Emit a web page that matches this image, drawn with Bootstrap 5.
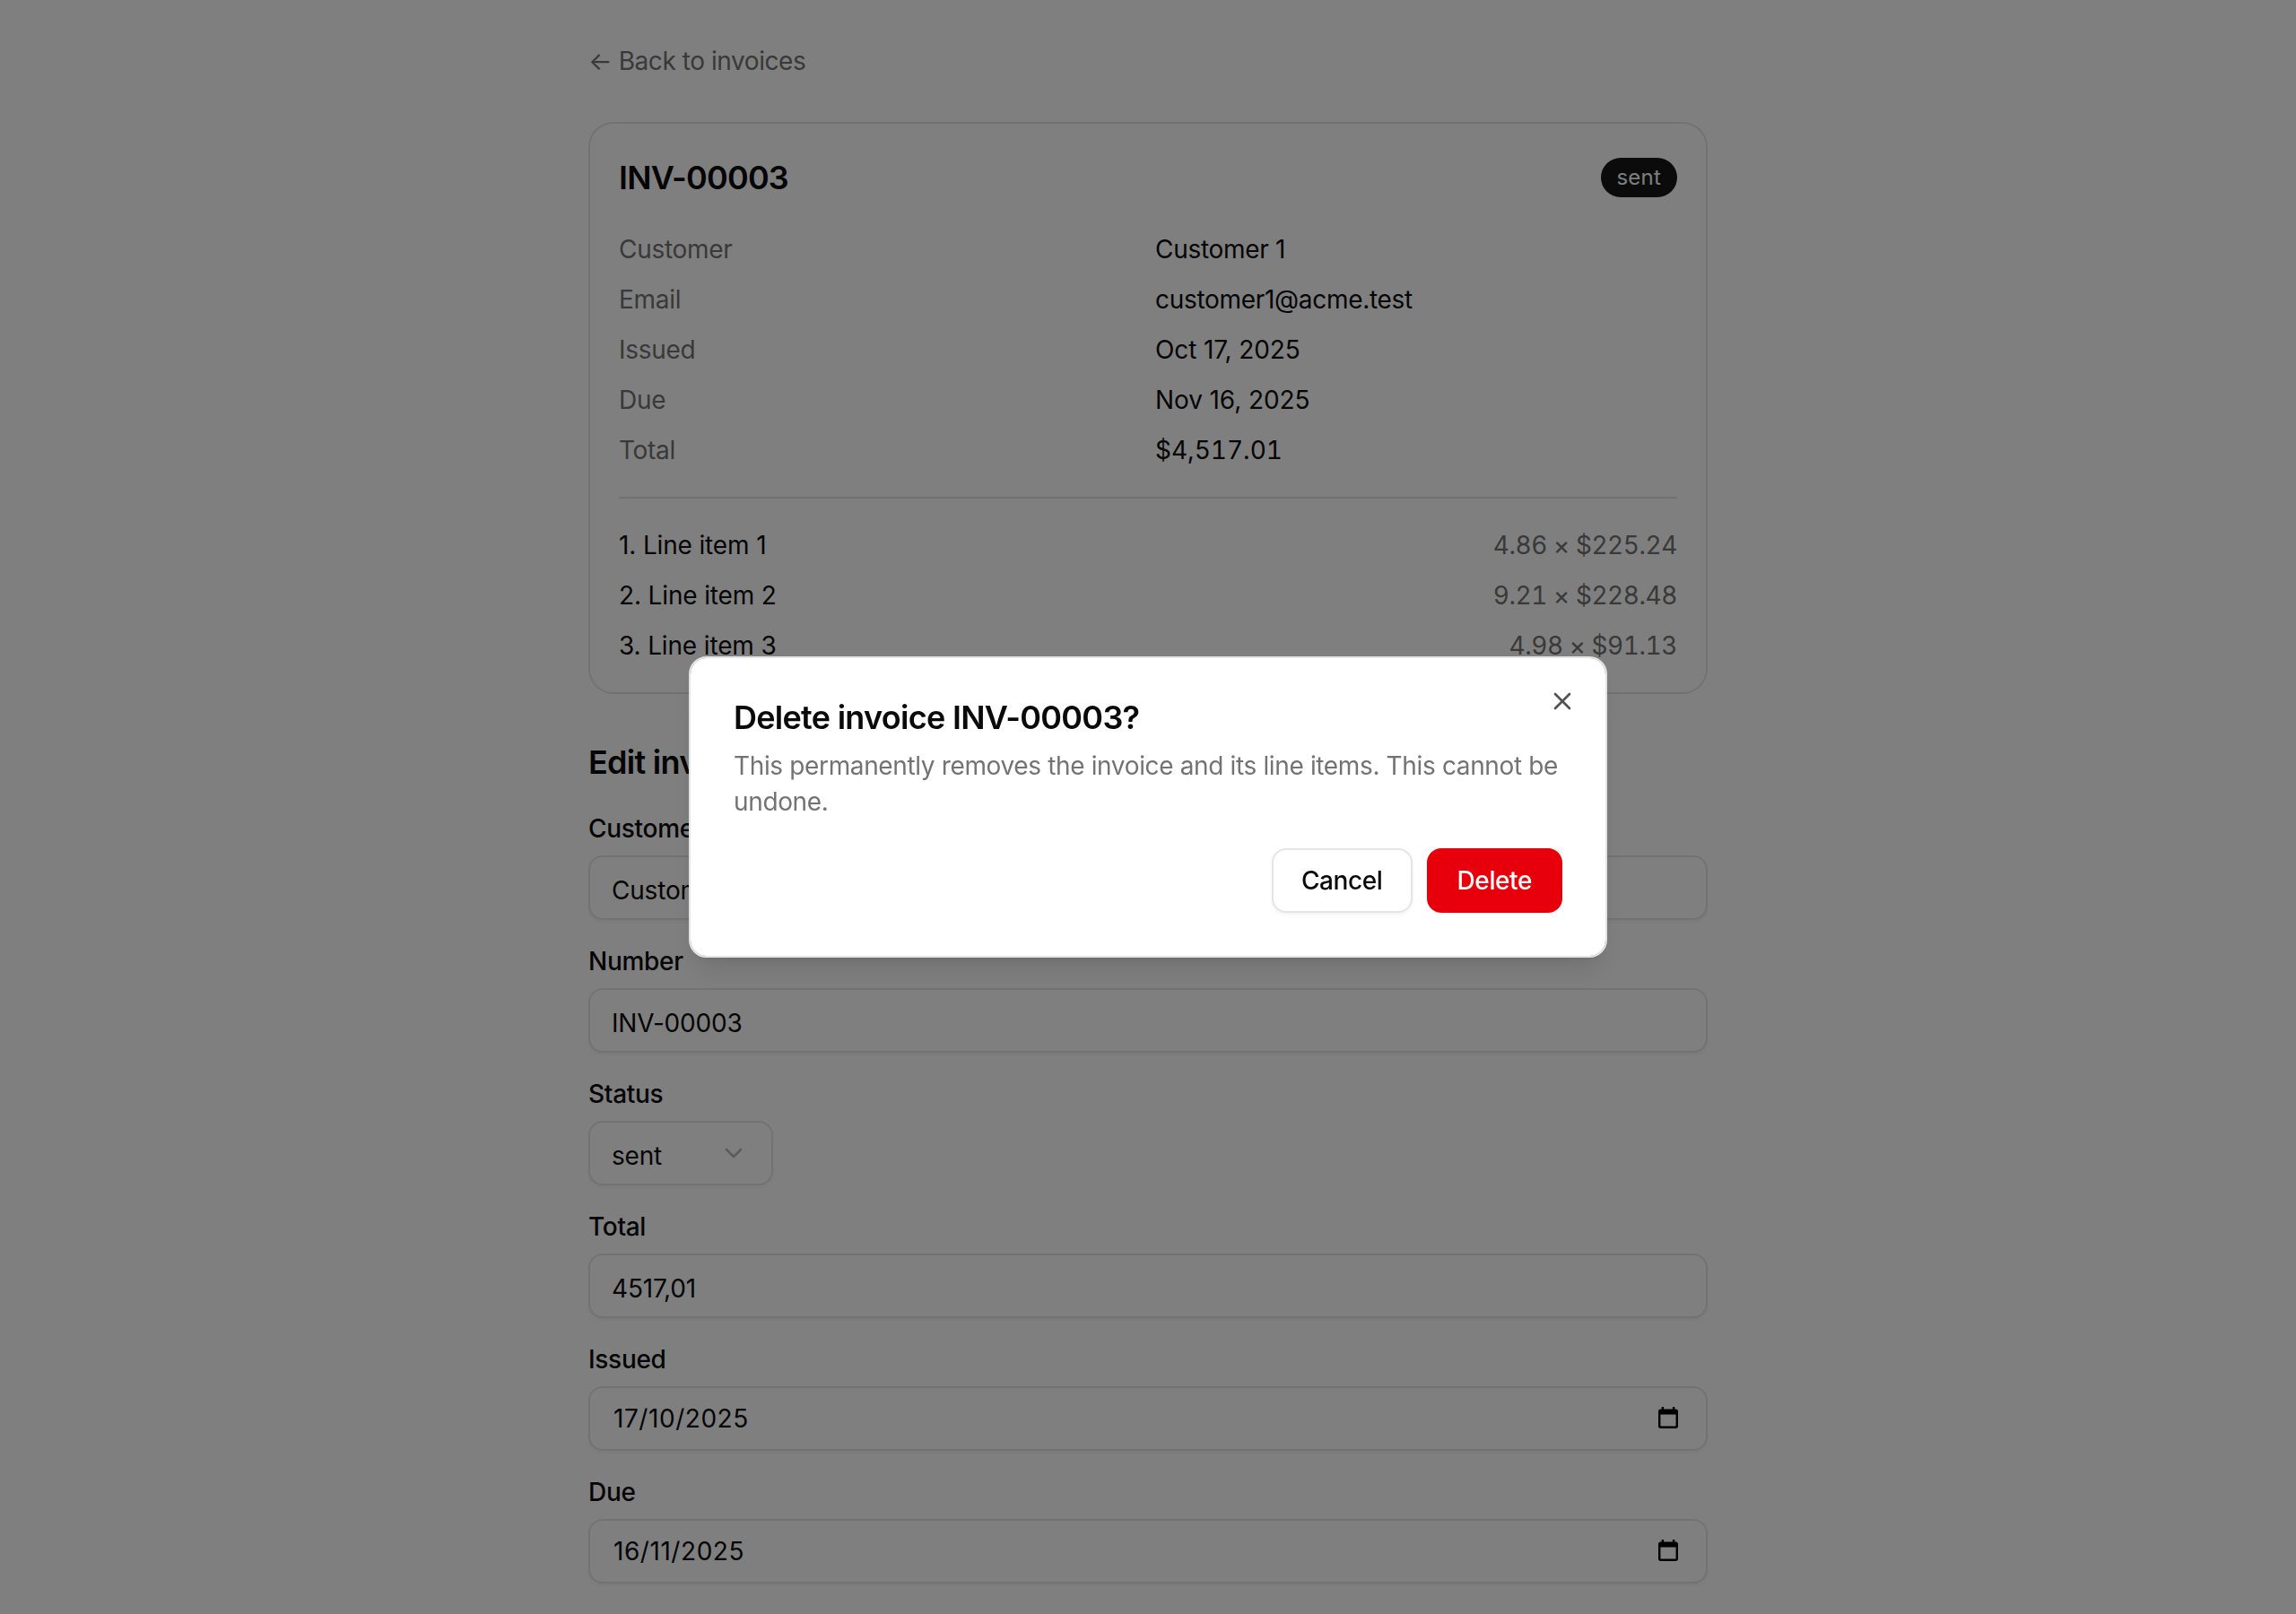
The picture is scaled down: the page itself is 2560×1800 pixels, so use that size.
<!DOCTYPE html>
<html lang="en">
<head>
<meta charset="utf-8">
<title>Invoice INV-00003</title>
<link href="https://cdn.jsdelivr.net/npm/bootstrap@5.3.0/dist/css/bootstrap.min.css" rel="stylesheet">
<style>
body{font-family:Inter,"Liberation Sans",sans-serif;font-size:28px;line-height:40px;letter-spacing:-.3px;color:#0a0a0a;background:#fff;height:1800px;overflow:hidden}
.page-wrap{width:1248px;margin:0 auto;padding-top:48px}
.back-link{color:#737373;text-decoration:none;display:block;margin-bottom:48px;letter-spacing:-.44px}
.inv-card{border:2px solid #e5e5e5;border-radius:28px;padding:32px;background:#fff;--bs-card-bg:#fff}
.inv-head{height:56px;margin-bottom:32px}
.inv-title{font-size:36px;line-height:56px;font-weight:600;letter-spacing:-.8px;margin:0}
.inv-pill{font-size:24px;line-height:32px;font-weight:400;letter-spacing:.2px;border-radius:999px;padding:4px 16px;border:2px solid transparent;background:#171717;color:#fafafa}
.muted-txt{color:#737373}
.tab-num{font-variant-numeric:tabular-nums;letter-spacing:0}
.amt-num{font-variant-numeric:tabular-nums;letter-spacing:-.45px}
.date-val{letter-spacing:-.1px}
.item-name{letter-spacing:-.15px}
.inv-rule{margin:32px 0;border:0;border-top:2px solid #e5e5e5;opacity:1}
.edit-title{font-size:36px;line-height:56px;font-weight:600;letter-spacing:-.72px;margin:48px 0 32px}
.field-stack{display:flex;flex-direction:column;gap:32px}
.fld-label{display:block;font-size:28px;line-height:28px;font-weight:500;margin-bottom:16px}
.fld-input{height:72px;font-size:28px;line-height:40px;letter-spacing:-.2px;color:#0a0a0a;border:2px solid #e5e5e5;border-radius:16px;padding:17px 24px 11px;background:transparent;box-shadow:0 2px 4px rgba(0,0,0,.05)}
.fld-date{padding:14px 24px 14px 26px;letter-spacing:.55px}
.fld-select{width:206px;background-image:none;padding-right:72px}
.chev-ico{position:absolute;left:146px;top:20px;opacity:.5;pointer-events:none}
.cal-ico{position:absolute;right:33px;top:23px;pointer-events:none}
.del-dialog{max-width:1024px;width:1024px}
.del-content{border:2px solid #e5e5e5;border-radius:20px;padding:48px;box-shadow:0 20px 30px -6px rgba(0,0,0,.1),0 8px 12px -8px rgba(0,0,0,.1)}
.del-title{font-size:36px;line-height:36px;font-weight:600;letter-spacing:-.72px;margin:0 0 16px}
.del-text{color:#737373;letter-spacing:-.36px;margin:0 0 32px}
.act-btn{height:72px;font-size:28px;line-height:40px;font-weight:500;letter-spacing:-.4px;border-radius:16px;padding:14px 31px;border-width:2px}
.act-cancel{background:#fff;border-color:#e5e5e5;color:#0a0a0a;box-shadow:0 2px 4px rgba(0,0,0,.05)}
.act-delete{background:#e7000b;border-color:#e7000b;color:#fff;padding:14px 32px}
.x-close{position:absolute;top:32px;right:32px;width:32px;height:32px;padding:0;border:0;background:none;opacity:.7;line-height:0;color:#0a0a0a}
</style>
</head>
<body>
<main class="page-wrap">
  <a class="back-link" href="#">← Back to invoices</a>
  <section class="card inv-card">
    <div class="d-flex justify-content-between align-items-center inv-head">
      <h1 class="inv-title">INV-00003</h1>
      <span class="inv-pill">sent</span>
    </div>
    <div class="row g-3">
      <div class="col-6 muted-txt">Customer</div><div class="col-6">Customer 1</div>
      <div class="col-6 muted-txt">Email</div><div class="col-6">customer1@acme.test</div>
      <div class="col-6 muted-txt">Issued</div><div class="col-6 date-val">Oct 17, 2025</div>
      <div class="col-6 muted-txt">Due</div><div class="col-6 date-val">Nov 16, 2025</div>
      <div class="col-6 muted-txt">Total</div><div class="col-6 tab-num">$4,517.01</div>
    </div>
    <hr class="inv-rule">
    <div class="d-flex flex-column gap-3">
      <div class="d-flex justify-content-between"><span class="item-name">1. Line item 1</span><span class="muted-txt amt-num">4.86 × $225.24</span></div>
      <div class="d-flex justify-content-between"><span class="item-name">2. Line item 2</span><span class="muted-txt amt-num">9.21 × $228.48</span></div>
      <div class="d-flex justify-content-between"><span class="item-name">3. Line item 3</span><span class="muted-txt amt-num">4.98 × $91.13</span></div>
    </div>
  </section>
  <h2 class="edit-title">Edit invoice</h2>
  <form class="field-stack">
    <div><label class="fld-label">Customer</label><input class="form-control fld-input" value="Customer 1"></div>
    <div><label class="fld-label">Number</label><input class="form-control fld-input" value="INV-00003"></div>
    <div><label class="fld-label">Status</label>
      <div class="position-relative fld-select-wrap">
        <select class="form-select fld-input fld-select"><option>sent</option></select>
        <svg class="chev-ico" width="32" height="32" viewBox="0 0 24 24" fill="none" stroke="#737373" stroke-width="2" stroke-linecap="round" stroke-linejoin="round"><path d="m6 9 6 6 6-6"/></svg>
      </div>
    </div>
    <div><label class="fld-label">Total</label><input class="form-control fld-input" value="4517,01"></div>
    <div><label class="fld-label">Issued</label>
      <div class="position-relative"><input class="form-control fld-input fld-date" value="17/10/2025">
        <svg class="cal-ico" width="22" height="24" viewBox="3 1 18 20" preserveAspectRatio="none"><path fill="#000" d="M19 3h-1V1h-2v2H8V1H6v2H5c-1.11 0-1.99.9-1.99 2L3 19c0 1.1.89 2 2 2h14c1.1 0 2-.9 2-2V5c0-1.1-.9-2-2-2zm0 16H5V8h14v11z"/></svg>
      </div>
    </div>
    <div><label class="fld-label">Due</label>
      <div class="position-relative"><input class="form-control fld-input fld-date" value="16/11/2025">
        <svg class="cal-ico" width="22" height="24" viewBox="3 1 18 20" preserveAspectRatio="none"><path fill="#000" d="M19 3h-1V1h-2v2H8V1H6v2H5c-1.11 0-1.99.9-1.99 2L3 19c0 1.1.89 2 2 2h14c1.1 0 2-.9 2-2V5c0-1.1-.9-2-2-2zm0 16H5V8h14v11z"/></svg>
      </div>
    </div>
  </form>
</main>
<div class="modal-backdrop show"></div>
<div class="modal d-block" role="dialog" aria-modal="true">
  <div class="modal-dialog modal-dialog-centered del-dialog">
    <div class="modal-content del-content">
      <button type="button" class="x-close" aria-label="Close"><svg width="32" height="32" viewBox="0 0 24 24" fill="none" stroke="currentColor" stroke-width="2" stroke-linecap="round" stroke-linejoin="round"><path d="M18 6 6 18"/><path d="m6 6 12 12"/></svg></button>
      <h2 class="del-title">Delete invoice INV-00003?</h2>
      <p class="del-text">This permanently removes the invoice and its line items. This cannot be undone.</p>
      <div class="d-flex justify-content-end gap-3">
        <button type="button" class="btn act-btn act-cancel">Cancel</button>
        <button type="button" class="btn act-btn act-delete">Delete</button>
      </div>
    </div>
  </div>
</div>
</body>
</html>
